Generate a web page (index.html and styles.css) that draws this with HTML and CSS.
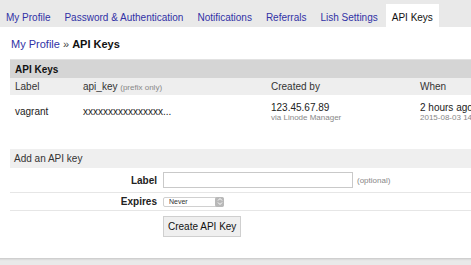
FILE: index.html
```html
<!DOCTYPE html>
<html lang="en">
<head>
<meta charset="utf-8">
<title>API Keys</title>
<link rel="stylesheet" href="styles.css">
</head>
<body>

    <nav class="tabs">
        <a href="#">My Profile</a>
        <a href="#">Password &amp; Authentication</a>
        <a href="#">Notifications</a>
        <a href="#">Referrals</a>
        <a href="#">Lish Settings</a>
        <span class="active">API Keys</span>
    </nav>

    <div class="panel">
        <h1><a href="#">My Profile</a> <span class="sep">»</span> <b>API Keys</b></h1>

        <table class="keys">
            <tr class="caption"><th colspan="4">API Keys</th></tr>
            <tr class="head">
                <td class="c-label">Label</td>
                <td class="c-key">api_key <span class="hint">(prefix only)</span></td>
                <td class="c-by">Created by</td>
                <td class="c-when">When</td>
            </tr>
            <tr class="row">
                <td>vagrant</td>
                <td>xxxxxxxxxxxxxxxx...</td>
                <td>123.45.67.89<span class="sub">via Linode Manager</span></td>
                <td>2 hours ago<span class="sub">2015-08-03 14:22:07</span></td>
            </tr>
        </table>

        <form class="add-key">
            <div class="bar">Add an API key</div>
            <div class="field">
                <label for="label">Label</label>
                <div class="control"><input id="label" type="text"> <span class="hint">(optional)</span></div>
            </div>
            <div class="field small">
                <label for="expires">Expires</label>
                <div class="select-wrap">
                    <select id="expires"><option>Never</option></select>
                    <span class="stepper">
                        <svg width="8" height="9" viewBox="0 0 8 9"><path d="M2 3.5 L4 1.5 L6 3.5 M2 5.5 L4 7.5 L6 5.5" fill="none" stroke="#fff" stroke-width="1"/></svg>
                    </span>
                </div>
            </div>
            <div class="field last">
                <span></span>
                <div class="control"><button type="button">Create API Key</button></div>
            </div>
        </form>
    </div>

</body>
</html>
```

FILE: styles.css
```css
html, body {
    margin: 0;
    overflow: hidden;
}

body {
    background-color: #e9e9e9;
    font-family: "Liberation Sans", Arial, sans-serif;
    font-size: 10px;
    color: #222;
    width: 471px;
    height: 265px;
}

a {
    color: #3131a6;
    text-decoration: none;
}

.tabs {
    display: flex;
    align-items: flex-end;
    height: 27px;
    background-color: #e9e9e9;
}

.tabs a, .tabs span {
    padding: 0 6px;
    margin-right: 2px;
    height: 23px;
    line-height: 27px;
    white-space: nowrap;
}

.tabs .active {
    background-color: white;
    color: #111;
}

.panel {
    background-color: white;
    height: 231px;
    padding-left: 10px;
    border-bottom: 1px solid #cfcfcf;
    box-shadow: 0 1px 1px #dcdcdc;
    overflow: hidden;
}

h1 {
    font-size: 11px;
    font-weight: normal;
    line-height: 14px;
    margin: 0;
    padding: 10px 0 8px 1px;
    white-space: nowrap;
}

h1 .sep {
    color: #444;
}

h1 b {
    color: #111;
}

.keys {
    border-collapse: collapse;
    width: 560px;
    border-top: 1px solid #e2e2e2;
}

.keys td, .keys th {
    padding: 0 5px;
    text-align: left;
    white-space: nowrap;
}

.keys .caption th {
    background-color: #d5d5d5;
    height: 18px;
    font-weight: bold;
    color: #111;
}

.keys .head td {
    background-color: #eeeeee;
    height: 17px;
    color: #333;
}

.keys .row td {
    height: 27px;
    vertical-align: middle;
    padding-top: 3px;
}

.c-label { width: 58px; }
.c-key { width: 178px; }
.c-by { width: 139px; }

.hint {
    font-size: 8px;
    color: #888;
}

.sub {
    display: block;
    font-size: 8px;
    line-height: 9px;
    color: #888;
}

.add-key {
    margin-top: 24px;
    width: 600px;
}

.add-key .bar {
    background-color: #efefef;
    height: 19px;
    line-height: 19px;
    padding-left: 4px;
    color: #333;
}

.field {
    display: grid;
    grid-template-columns: 147px 1fr;
    column-gap: 6px;
    align-items: center;
    border-bottom: 1px solid #e6e6e6;
    padding: 4px 0;
}

.field.small {
    padding: 3px 0;
}

.field.last {
    border-bottom: none;
}

.field label {
    text-align: right;
    font-weight: bold;
    color: #222;
}

.control {
    display: flex;
    align-items: center;
    gap: 4px;
}

input[type="text"] {
    width: 184px;
    height: 12px;
    border: 1px solid #c9c9c9;
    padding: 1px 2px;
    font-size: 10px;
    margin: 0;
}

.select-wrap {
    position: relative;
    width: 61px;
    height: 10px;
}

select {
    appearance: none;
    -webkit-appearance: none;
    width: 61px;
    height: 10px;
    font-size: 7px;
    font-family: inherit;
    padding: 0 0 0 5px;
    border: 1px solid #d0d0d0;
    border-radius: 2px;
    background-color: white;
    color: #333;
    display: block;
}

.stepper {
    position: absolute;
    right: 0;
    top: 0;
    width: 9px;
    height: 10px;
    background-color: #b9b9b9;
    border-radius: 2px;
    display: flex;
    align-items: center;
    justify-content: center;
}

button {
    font-family: inherit;
    font-size: 10px;
    color: #111;
    background-color: #efefef;
    border: 1px solid #cfcfcf;
    height: 21px;
    padding: 0 4px;
    margin: 1px 0 0 0;
}
```
